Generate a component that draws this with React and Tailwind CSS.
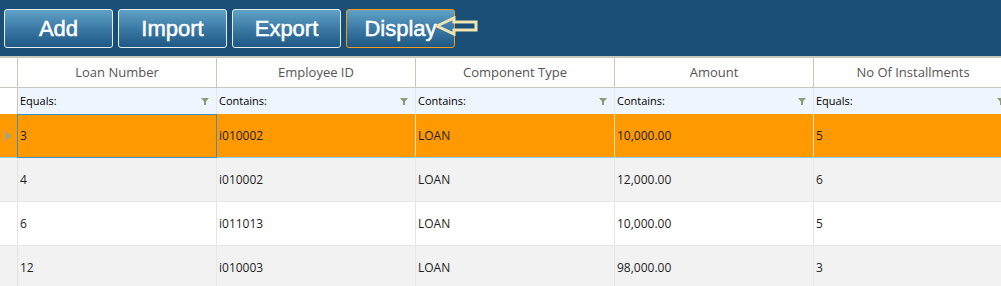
import React from "react";

const columns = [
  { title: "Loan Number", filter: "Equals:" },
  { title: "Employee ID", filter: "Contains:" },
  { title: "Component Type", filter: "Contains:" },
  { title: "Amount", filter: "Contains:" },
  { title: "No Of Installments", filter: "Equals:" },
];

const rows = [
  ["3", "i010002", "LOAN", "10,000.00", "5"],
  ["4", "i010002", "LOAN", "12,000.00", "6"],
  ["6", "i011013", "LOAN", "10,000.00", "5"],
  ["12", "i010003", "LOAN", "98,000.00", "3"],
];

const buttons = ["Add", "Import", "Export", "Display"];

const FilterIcon = () => (
  <svg width="8" height="7" viewBox="0 0 8 7" className="shrink-0">
    <path d="M0 0 H8 L5 3.5 V7 H3 V3.5 Z" fill="#8d9b7a" />
  </svg>
);

const Arrow = () => (
  <svg
    width="44"
    height="20"
    viewBox="0 0 44 20"
    className="absolute left-[435px] top-[16px]"
  >
    <path
      d="M2 10 L19 2 V6 H41 V14 H19 V18 Z"
      fill="none"
      stroke="#efe3b0"
      strokeWidth="3"
      strokeLinejoin="miter"
    />
  </svg>
);

export default function App() {
  return (
    <div className="w-[1001px] h-[286px] overflow-hidden bg-white font-['Open_Sans',sans-serif]">
      {/* toolbar */}
      <div className="relative h-[56px] bg-[#1a4e76] flex items-center gap-[5px] px-[4px] pt-[1px]">
        {buttons.map((b) => (
          <button
            key={b}
            className={`w-[109px] h-[39px] rounded-[3px] border bg-gradient-to-b from-[#5fa2c6] via-[#3c7aa6] to-[#1e5884] text-white text-[22px] font-['Liberation_Sans',Arial,sans-serif] [-webkit-text-stroke:0.5px_white] ${
              b === "Display" ? "border-[#f39a1e]" : "border-[#e6eef4]"
            }`}
          >
            {b}
          </button>
        ))}
        <Arrow />
      </div>

      {/* grid */}
      <div className="w-[1100px] grid grid-cols-[18px_repeat(5,199px)] border-t-2 border-[#c8c9b8]">
        {/* header */}
        <div className="h-[30px] border-r border-b border-[#c8c9b8] bg-white" />
        {columns.map((c) => (
          <div
            key={c.title}
            className="h-[30px] border-r border-b border-[#c8c9b8] bg-white flex items-center justify-center text-[13px] text-[#555555]"
          >
            {c.title}
          </div>
        ))}

        {/* filter row */}
        <div className="h-[26px] border-r border-[#c8c9b8] bg-white" />
        {columns.map((c) => (
          <div
            key={c.filter + c.title}
            className="h-[26px] border-r border-[#e3e6ea] bg-[#eff5fc] flex items-center justify-between pl-[2px] pr-[7px] text-[11px] text-black"
          >
            <span>{c.filter}</span>
            <FilterIcon />
          </div>
        ))}

        {/* data rows */}
        {rows.map((r, i) => {
          const selected = i === 0;
          const bg = selected
            ? "bg-[#ff9900]"
            : i % 2 === 1
            ? "bg-[#f2f2f2]"
            : "bg-white";
          return (
            <React.Fragment key={i}>
              <div
                className={`h-[44px] flex items-center pl-[5px] border-r border-[#e3e3e3] ${
                  selected ? "bg-[#ff9900] border-b border-b-[#8fd0f0]" : `${bg} border-b border-b-[#e6e6e6]`
                }`}
              >
                {selected && (
                  <svg width="6" height="10" viewBox="0 0 6 10">
                    <path d="M0 0 L6 5 L0 10 Z" fill="#a4a48c" />
                  </svg>
                )}
              </div>
              {r.map((v, j) => (
                <div
                  key={j}
                  className={`h-[44px] flex items-center pl-[2px] text-[12px] text-[#1e1e1e] ${bg} ${
                    selected
                      ? j === 0
                        ? "border border-[#3a90c8] -ml-px"
                        : "border-r border-r-[#f6e2c0] border-b border-b-[#8fd0f0]"
                      : "border-r border-[#e6e6e6] border-b"
                  }`}
                >
                  {v}
                </div>
              ))}
            </React.Fragment>
          );
        })}
      </div>
    </div>
  );
}
